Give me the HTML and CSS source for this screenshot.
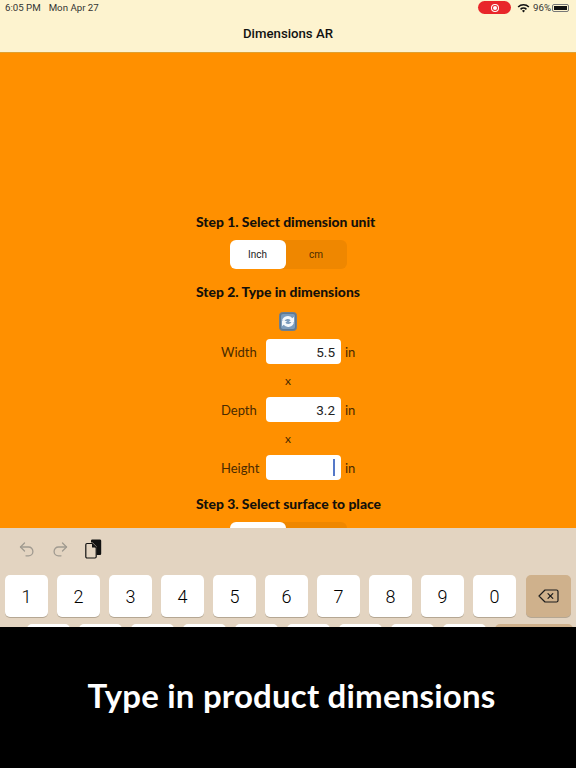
FILE: index.html
```html
<!DOCTYPE html>
<html lang="en">
<head>
    <meta charset="UTF-8">
    <meta name="viewport" content="width=device-width, initial-scale=1.0">
    <link rel="stylesheet" href="styles.css">
    <title>Dimensions AR</title>
</head>
<body>
    <header class="topbar">
        <div class="status">
            <span class="status-time">6:05 PM</span>
            <span class="status-date">Mon Apr 27</span>
            <span class="status-right">
                <span class="rec"><span class="rec-dot"></span></span>
                <svg class="wifi" width="13" height="10" viewBox="0 0 13 10">
                    <path d="M0.6 3.4a8.4 8.4 0 0 1 11.8 0l-1.1 1.2a6.8 6.8 0 0 0-9.6 0z" fill="#111"/>
                    <path d="M3 5.8a5 5 0 0 1 7 0L8.9 7a3.4 3.4 0 0 0-4.8 0z" fill="#111"/>
                    <path d="M5 7.8a2.1 2.1 0 0 1 3 0L6.5 9.5z" fill="#111"/>
                </svg>
                <span class="battery-pct">96%</span>
                <span class="battery"><span class="battery-fill"></span></span>
            </span>
        </div>
        <div class="nav-title">Dimensions AR</div>
    </header>

    <main class="form">
        <h2 class="step">Step 1. Select dimension unit</h2>
        <div class="segment">
            <span class="seg-item seg-on">Inch</span>
            <span class="seg-item">cm</span>
        </div>

        <h2 class="step step-two">Step 2. Type in dimensions</h2>
        <svg class="swap" width="18" height="19" viewBox="0 0 18 19">
            <rect x="0.5" y="0.5" width="17" height="18" rx="3" fill="#5f7890" stroke="#6c7f92"/>
            <rect x="2" y="2" width="14" height="15" rx="2" fill="#7c9cbd"/>
            <path d="M3 8.6a6 6 0 0 1 10.4-2.4l1.6-1.4v5.2H9.8l1.8-1.7a3.6 3.6 0 0 0-6.2 1z" fill="#f4f7fa"/>
            <path d="M15 10.4a6 6 0 0 1-10.4 2.4L3 14.2V9h5.2l-1.8 1.7a3.6 3.6 0 0 0 6.2-1z" fill="#f4f7fa"/>
        </svg>

        <div class="dim-row dim-row-first">
            <span class="dim-label">Width</span>
            <span class="dim-input">5.5</span>
            <span class="dim-unit">in</span>
        </div>
        <div class="times">x</div>
        <div class="dim-row">
            <span class="dim-label">Depth</span>
            <span class="dim-input">3.2</span>
            <span class="dim-unit">in</span>
        </div>
        <div class="times">x</div>
        <div class="dim-row">
            <span class="dim-label">Height</span>
            <span class="dim-input"><span class="caret"></span></span>
            <span class="dim-unit">in</span>
        </div>

        <h2 class="step step-three">Step 3. Select surface to place</h2>
        <div class="segment">
            <span class="seg-item seg-on"></span>
            <span class="seg-item"></span>
        </div>
    </main>

    <section class="keyboard">
        <div class="kb-tools">
            <svg width="16" height="16" viewBox="0 0 16 16" fill="none" stroke="#a09a90" stroke-width="1.3" stroke-linecap="round" stroke-linejoin="round">
                <path d="M5.5 2 1.5 6l4 4"/>
                <path d="M1.5 6H9.5a4.4 4.4 0 0 1 0 8.8H7"/>
            </svg>
            <svg width="16" height="16" viewBox="0 0 16 16" fill="none" stroke="#a09a90" stroke-width="1.3" stroke-linecap="round" stroke-linejoin="round">
                <path d="M10.5 2l4 4-4 4"/>
                <path d="M14.5 6H6.5a4.4 4.4 0 0 0 0 8.8H9"/>
            </svg>
            <svg class="paste" width="17" height="20" viewBox="0 0 17 20">
                <path d="M6 1.5A1.2 1.2 0 0 1 7.2.5h8A1.2 1.2 0 0 1 16.2 1.7v13a1.2 1.2 0 0 1-1.2 1.2h-3.5V7.5L7.5 3.5H6z" fill="#111"/>
                <path d="M2 4.5h5.2l4 4v9.3a1.2 1.2 0 0 1-1.2 1.2H2a1.2 1.2 0 0 1-1.2-1.2V5.7A1.2 1.2 0 0 1 2 4.5z" fill="none" stroke="#111" stroke-width="1.2"/>
                <path d="M7 4.5v4h4.2z" fill="#111"/>
            </svg>
        </div>
        <div class="kb-row">
            <span class="key">1</span>
            <span class="key">2</span>
            <span class="key">3</span>
            <span class="key">4</span>
            <span class="key">5</span>
            <span class="key">6</span>
            <span class="key">7</span>
            <span class="key">8</span>
            <span class="key">9</span>
            <span class="key">0</span>
            <span class="key key-del">
                <svg width="21" height="14" viewBox="0 0 21 14" fill="none" stroke="#1c1c1c" stroke-width="1.2" stroke-linejoin="round" stroke-linecap="round">
                    <path d="M7 1h11.5A1.5 1.5 0 0 1 20 2.5v9a1.5 1.5 0 0 1-1.5 1.5H7L1 7z"/>
                    <path d="M10 4.6l4.8 4.8M14.8 4.6 10 9.4"/>
                </svg>
            </span>
        </div>
        <div class="kb-row kb-row-next">
            <span class="key-top"></span>
            <span class="key-top"></span>
            <span class="key-top"></span>
            <span class="key-top"></span>
            <span class="key-top"></span>
            <span class="key-top"></span>
            <span class="key-top"></span>
            <span class="key-top"></span>
            <span class="key-top"></span>
            <span class="key-top key-top-return"></span>
        </div>
    </section>

    <footer class="caption">Type in product dimensions</footer>
</body>
</html>
```

FILE: styles.css
```css
html, body {
  margin: 0;
  padding: 0;
}

body {
  width: 576px;
  height: 768px;
  overflow: hidden;
  display: flex;
  flex-direction: column;
  font-family: Lato, 'Liberation Sans', sans-serif;
  background-color: #000000;
}

/* status bar + nav bar */
.topbar {
  height: 52px;
  flex: none;
  background-color: #fdf3cf;
  border-bottom: 1px solid #e0a030;
  color: #111111;
}

.status {
  height: 15px;
  padding: 0 5px 0 5px;
  display: flex;
  align-items: center;
  font-family: Roboto, 'Liberation Sans', sans-serif;
  font-size: 9.7px;
  color: #333333;
}

.status-date {
  margin-left: 8px;
}

.status-right {
  margin-left: auto;
  display: flex;
  align-items: center;
}

.rec {
  width: 33px;
  height: 13px;
  border-radius: 7px;
  background-color: #e8262a;
  display: flex;
  align-items: center;
  justify-content: center;
}

.rec-dot {
  width: 4px;
  height: 4px;
  border-radius: 50%;
  background-color: #ffffff;
  box-shadow: 0 0 0 1px #e8262a, 0 0 0 2px #ffffff;
}

.wifi {
  margin-left: 6px;
}

.battery-pct {
  margin-left: 3px;
}

.battery {
  width: 17px;
  height: 8px;
  margin-left: 1px;
  margin-right: 2px;
  padding: 1px;
  box-sizing: border-box;
  border: 1px solid #777777;
  border-radius: 2px;
  display: flex;
}

.battery-fill {
  flex: 1;
  background-color: #111111;
}

.nav-title {
  margin-top: 10px;
  text-align: center;
  font-family: Roboto, 'Liberation Sans', sans-serif;
  font-size: 13.2px;
  font-weight: 500;
  line-height: 17px;
}

/* orange form area */
.form {
  height: 475px;
  flex: none;
  overflow: hidden;
  box-sizing: border-box;
  padding-top: 160px;
  background-color: #ff9000;
  display: flex;
  flex-direction: column;
  align-items: center;
}

.step {
  margin: 0 0 0 196px;
  align-self: flex-start;
  font-size: 13.9px;
  font-weight: 900;
  line-height: 18px;
  color: #14100a;
}

.segment {
  width: 117px;
  height: 29px;
  flex: none;
  margin-top: 9px;
  display: flex;
  border-radius: 6px;
  background-color: #ef8700;
}

.seg-item {
  flex: 1;
  border-radius: 6px;
  display: flex;
  align-items: center;
  justify-content: center;
  font-family: Roboto, 'Liberation Sans', sans-serif;
  font-size: 10px;
  color: #4a2c00;
}

.seg-on {
  flex: none;
  width: 56px;
  background-color: #ffffff;
  color: #222222;
}

.step-two {
  margin-top: 14px;
}

.swap {
  flex: none;
  margin-top: 11px;
}

.dim-row {
  margin-top: 7px;
  margin-left: 5px;
  width: 139px;
  height: 25px;
  flex: none;
  display: flex;
  align-items: center;
  font-size: 13px;
  color: #4a2a00;
}

.dim-row-first {
  margin-top: 8px;
}

.dim-label {
  width: 45px;
}

.dim-input {
  width: 75px;
  height: 25px;
  padding-right: 6px;
  box-sizing: border-box;
  border-radius: 4px;
  background-color: #ffffff;
  display: flex;
  align-items: center;
  justify-content: flex-end;
  font-family: Roboto, 'Liberation Sans', sans-serif;
  font-size: 13.5px;
  color: #222222;
}

.dim-unit {
  margin-left: 4px;
}

.times {
  height: 26px;
  margin-top: 7px;
  margin-bottom: -7px;
  flex: none;
  line-height: 20px;
  font-size: 12px;
  color: #4a2a00;
}

.caret {
  width: 2px;
  height: 17px;
  background-color: #5578c8;
}

.step-three {
  margin-top: 15px;
}

/* keyboard */
.keyboard {
  height: 99px;
  flex: none;
  overflow: hidden;
  background-color: #e3d4c1;
}

.kb-tools {
  height: 47px;
  padding-left: 19px;
  padding-bottom: 6px;
  box-sizing: border-box;
  display: flex;
  align-items: center;
  gap: 17px;
}

.kb-row {
  display: flex;
  gap: 9px;
  padding-left: 5px;
}

.key {
  width: 43px;
  height: 42px;
  flex: none;
  border-radius: 5px;
  background-color: #ffffff;
  box-shadow: 0 1px 0 #b5a793;
  display: flex;
  align-items: center;
  justify-content: center;
  font-family: Roboto, 'Liberation Sans', sans-serif;
  font-size: 18px;
  font-weight: 300;
  color: #000000;
}

.key-del {
  width: 45px;
  margin-left: 1px;
  background-color: #cfb18c;
}

.kb-row-next {
  margin-top: 7px;
  padding-left: 27px;
}

.key-top {
  width: 43px;
  height: 30px;
  flex: none;
  border-radius: 5px;
  background-color: #ffffff;
}

.key-top-return {
  width: 78px;
  background-color: #cfb18c;
}

/* caption strip */
.caption {
  flex: 1;
  background-color: #000000;
  color: #ffffff;
  display: flex;
  align-items: center;
  justify-content: center;
  padding-bottom: 5px;
  padding-left: 7px;
  font-size: 33px;
  font-weight: 700;
  letter-spacing: 0.2px;
}
```
